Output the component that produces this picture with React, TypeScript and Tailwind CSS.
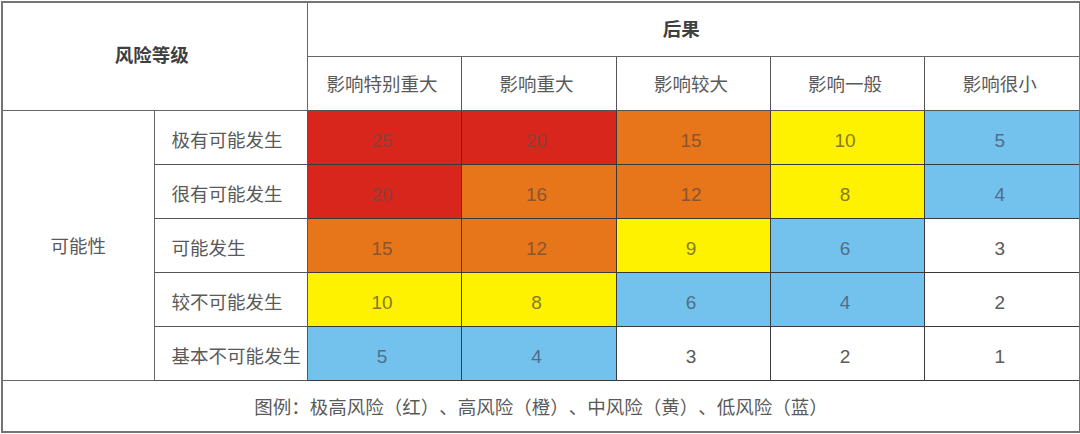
import React from 'react';

type Level = 'red' | 'orange' | 'yellow' | 'blue' | 'none';

const cellBg: Record<Level, string> = {
  red: 'bg-[#d9261c] text-[#8a4038]',
  orange: 'bg-[#e7761b] text-[#8a5530]',
  yellow: 'bg-[#fff200] text-[#857b22]',
  blue: 'bg-[#73c2ee] text-[#4f6f88]',
  none: 'bg-white text-[#5a5a5a]',
};

const impacts = ['影响特别重大', '影响重大', '影响较大', '影响一般', '影响很小'];

const rows: { label: string; cells: [number, Level][] }[] = [
  { label: '极有可能发生', cells: [[25, 'red'], [20, 'red'], [15, 'orange'], [10, 'yellow'], [5, 'blue']] },
  { label: '很有可能发生', cells: [[20, 'red'], [16, 'orange'], [12, 'orange'], [8, 'yellow'], [4, 'blue']] },
  { label: '可能发生', cells: [[15, 'orange'], [12, 'orange'], [9, 'yellow'], [6, 'blue'], [3, 'none']] },
  { label: '较不可能发生', cells: [[10, 'yellow'], [8, 'yellow'], [6, 'blue'], [4, 'blue'], [2, 'none']] },
  { label: '基本不可能发生', cells: [[5, 'blue'], [4, 'blue'], [3, 'none'], [2, 'none'], [1, 'none']] },
];

export default function App() {
  return (
    <div className="w-[1080px] h-[434px] bg-white pt-[1px] pl-[1px] font-['Liberation_Sans','Noto_Sans_CJK_SC',sans-serif] text-[18.5px] text-[#5a5a5a] [text-spacing-trim:space-all]">
      <table className="w-[1078px] border-collapse border-2 border-[#747474] table-fixed">
        <colgroup>
          <col className="w-[152px]" />
          <col className="w-[153px]" />
          <col className="w-[154px]" />
          <col className="w-[155px]" />
          <col className="w-[154px]" />
          <col className="w-[154px]" />
          <col className="w-[156px]" />
        </colgroup>
        <thead>
          <tr className="h-[54px]">
            <th colSpan={2} rowSpan={2} className="border border-[#666] font-bold text-[#3f3f3f] pr-[6px]">
              风险等级
            </th>
            <th colSpan={5} className="border border-[#666] font-bold text-[#3f3f3f] pt-[2px] pr-[24px]">
              后果
            </th>
          </tr>
          <tr className="h-[54px]">
            {impacts.map((t) => (
              <th key={t} className="border border-[#555] font-normal pr-[4px] pt-[4px]">
                {t}
              </th>
            ))}
          </tr>
        </thead>
        <tbody>
          {rows.map((r, i) => (
            <tr key={r.label} className="h-[54px]">
              {i === 0 && (
                <td rowSpan={5} className="border border-[#666] text-center pt-[4px]">
                  可能性
                </td>
              )}
              <td className="border border-[#555] pl-[17px] pt-[7px]">{r.label}</td>
              {r.cells.map(([n, lvl], j) => (
                <td key={j} className={`border border-[#3a3a3a] text-center text-[19px] pt-[8px] pr-[4px] ${cellBg[lvl]}`}>
                  {n}
                </td>
              ))}
            </tr>
          ))}
          <tr className="h-[52px]">
            <td colSpan={7} className="border border-[#666] text-center pt-[4px]">
              图例：极高风险（红）、高风险（橙）、中风险（黄）、低风险（蓝）
            </td>
          </tr>
        </tbody>
      </table>
    </div>
  );
}
